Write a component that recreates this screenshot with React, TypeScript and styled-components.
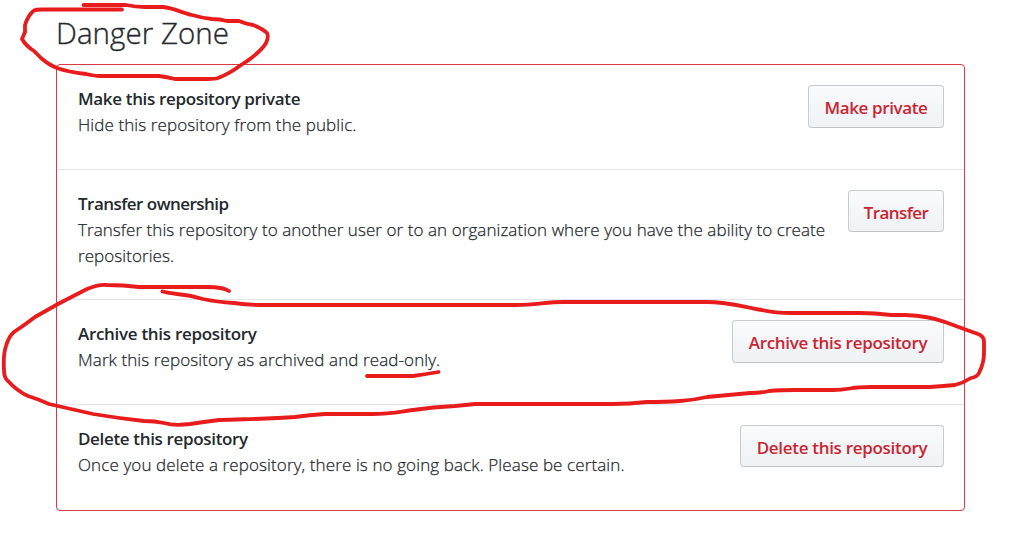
import React from "react";
import styled, { createGlobalStyle } from "styled-components";

const GlobalStyle = createGlobalStyle`
  * { box-sizing: border-box; }
  body {
    margin: 0;
    background: #fff;
    color: #24292e;
    font-family: "Segoe UI", "Open Sans", "Noto Sans", sans-serif;
    font-size: 17px;
    line-height: 26px;
    overflow: hidden;
  }
`;

const Page = styled.main`
  position: relative;
  width: 1015px;
  height: 554px;
  padding: 12px 50px 0 56px;
`;

const Heading = styled.h2`
  margin: 0 0 10px;
  height: 42px;
  font-size: 29.5px;
  font-weight: 300;
  line-height: 41px;
  letter-spacing: 0.05px;
  -webkit-text-stroke: 0.35px currentColor;
`;

const DangerBox = styled.ul`
  margin: 0;
  padding: 0;
  height: 447px;
  list-style: none;
  border: 1px solid #d73a49;
  border-radius: 4px;
`;

const Row = styled.li<{ $height: number }>`
  display: flex;
  justify-content: space-between;
  align-items: flex-start;
  height: ${(p) => p.$height}px;
  padding: 20px 20px 0 21px;
  & + & {
    border-top: 1px solid #e1e4e8;
  }
`;

const Copy = styled.div`
  white-space: nowrap;
  padding-top: 1px;
`;

const Title = styled.strong<{ $spacing: number }>`
  display: block;
  font-weight: 600;
  letter-spacing: ${(p) => p.$spacing}px;
`;

const Description = styled.p<{ $spacing: number }>`
  margin: 0;
  font-weight: 300;
  -webkit-text-stroke: 0.25px currentColor;
  letter-spacing: ${(p) => p.$spacing}px;
`;

const DangerButton = styled.button<{ $width: number; $height: number; $spacing: number }>`
  flex: none;
  width: ${(p) => p.$width}px;
  height: ${(p) => p.$height}px;
  padding: 3px 0 0;
  border: 1px solid #c8cbce;
  border-bottom-color: #c0c4c8;
  border-radius: 4px;
  background: linear-gradient(180deg, #fafbfc, #eff3f6 90%);
  color: #cb2431;
  font: inherit;
  font-weight: 600;
  letter-spacing: ${(p) => p.$spacing}px;
  white-space: nowrap;
`;

const Ink = styled.svg`
  position: absolute;
  inset: 0;
  pointer-events: none;
  fill: none;
  stroke: #e81c1c;
  stroke-width: 3.8;
  stroke-linecap: round;
  stroke-linejoin: round;
`;

const rows = [
  {
    title: "Make this repository private", ts: -0.34, lines: ["Hide this repository from the public."], ds: 0.1,
    action: "Make private", width: 136, buttonHeight: 43, bs: -0.38, height: 104,
  },
  {
    title: "Transfer ownership", ts: -0.53,
    lines: ["Transfer this repository to another user or to an organization where you have the ability to create", "repositories."],
    ds: 0.07, action: "Transfer", width: 96, buttonHeight: 42, bs: -0.6, height: 130,
  },
  {
    title: "Archive this repository", ts: -0.3, lines: ["Mark this repository as archived and read-only."], ds: 0.1,
    action: "Archive this repository", width: 212, buttonHeight: 43, bs: -0.3, height: 105,
  },
  {
    title: "Delete this repository", ts: -0.34, lines: ["Once you delete a repository, there is no going back. Please be certain."], ds: 0.11,
    action: "Delete this repository", width: 204, buttonHeight: 42, bs: -0.3, height: 106,
  },
];

export default function App() {
  return (
    <Page>
      <GlobalStyle />
      <Heading>Danger Zone</Heading>
      <DangerBox>
        {rows.map((r) => (
          <Row key={r.title} $height={r.height}>
            <Copy>
              <Title $spacing={r.ts}>{r.title}</Title>
              {r.lines.map((line) => (
                <Description key={line} $spacing={r.ds}>{line}</Description>
              ))}
            </Copy>
            <DangerButton $width={r.width} $height={r.buttonHeight} $spacing={r.bs}>{r.action}</DangerButton>
          </Row>
        ))}
      </DangerBox>
      <Ink width="1015" height="554" viewBox="0 0 1015 554">
        <path d="M83.500 5H126Q136 7 145 7H163C174 8 182 13 192 15Q202 18 212 19Q220 19 227 21H239Q246 24 253 25Q263 29 267 33Q269 37 266 43C262 50 252 58 241 65Q229 74 218 78Q215 79 208 79H175Q167 77 159 76H100Q95 76 86 74Q68 72 57 68Q49 65 41 58L34 51Q26 46 22 39L25 32V25Q28 15 34 10.500Q36 9.500 42 9.500H122" />
        <path d="M162.500 291.500Q168 293 177 294Q190 295 203 299Q217 302 234 303Q248 305 264 305H516C536 305 546 302 563 302H706C731 302 743 307 762 310Q775 313 792 313H860Q875 313 891 315H905Q929 316 945 322L964 329L978 334Q984 336 984 342V353Q984 363 979 373Q977 377 971 378Q963 383 955 385Q944 386 930 387H872Q858 387 850 388.500Q841 390 833 390H795Q780 390 769 391Q761 393 750 393L707 397Q694 400 680 401Q666 402 647 402Q629 404 613 404H475Q466 405 455 406Q433 407 413 410C398 412 389 414 372 414H325Q309 415 295 417C271 419 247 419 219 420Q203 422 190 424Q174 426 164 423Q155 421 144 421Q117 418 93 414L49 404Q38 399 28 396Q17 391 7 380Q4 377 4 370Q3 355 6 346Q9 336 14 332Q26 324 35 317L58 304L87 289Q99 284 107 285Q123 285 139 287H207Q223 287 229 291" />
        <path d="M367 376H413Q427 374 438.500 372" />
      </Ink>
    </Page>
  );
}
